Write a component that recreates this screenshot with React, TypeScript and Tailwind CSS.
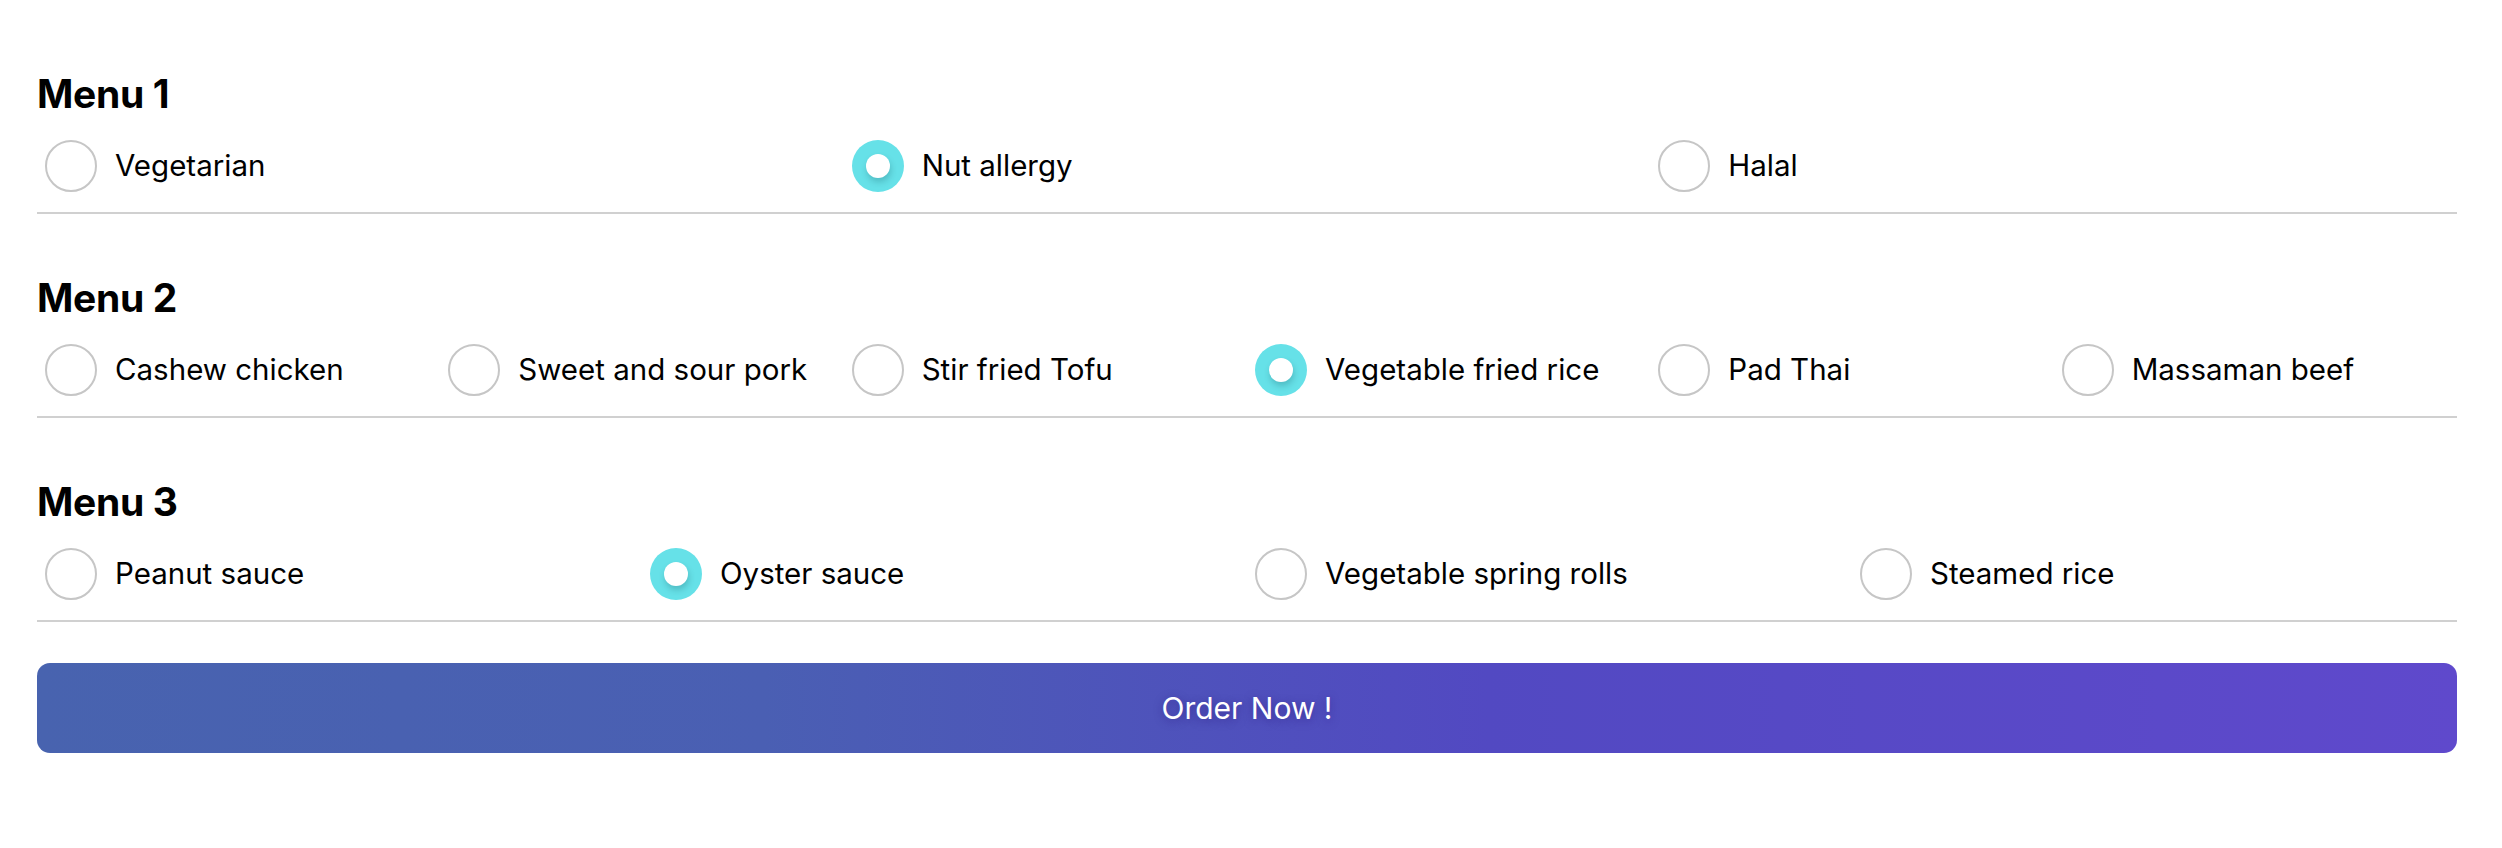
import React from "react";

type Menu = { title: string; items: string[]; selected: number; cols: string };

const menus: Menu[] = [
  { title: "Menu 1", items: ["Vegetarian", "Nut allergy", "Halal"], selected: 1, cols: "grid-cols-3" },
  {
    title: "Menu 2",
    items: ["Cashew chicken", "Sweet and sour pork", "Stir fried Tofu", "Vegetable fried rice", "Pad Thai", "Massaman beef"],
    selected: 3,
    cols: "grid-cols-6",
  },
  { title: "Menu 3", items: ["Peanut sauce", "Oyster sauce", "Vegetable spring rolls", "Steamed rice"], selected: 1, cols: "grid-cols-4" },
];

function Radio({ checked }: { checked: boolean }) {
  if (checked) {
    return (
      <span className="flex h-[52px] w-[52px] shrink-0 items-center justify-center rounded-full bg-[#66e1e8]">
        <span className="h-[24px] w-[24px] rounded-full bg-white shadow-[1px_4px_6px_rgba(0,60,70,0.22)]" />
      </span>
    );
  }
  return <span className="h-[52px] w-[52px] shrink-0 rounded-full border-[2px] border-[#c6c6c6] bg-white" />;
}

export default function App() {
  return (
    <div className="min-h-screen bg-white pl-[37px] pr-[45px] pt-[10px] text-black" style={{ fontFamily: "Inter, 'Noto Sans', sans-serif" }}>
      {menus.map((m) => (
        <section key={m.title} className="border-b-2 border-[#d0d0d0] pt-[60px] pb-[20px]">
          <h2 className="text-[39px] font-bold leading-[48px] tracking-[-0.3px]">{m.title}</h2>
          <div className={`mt-[22px] grid ${m.cols}`}>
            {m.items.map((it, i) => (
              <label key={it} className="flex h-[52px] items-center pl-[8px]">
                <Radio checked={i === m.selected} />
                <span className="ml-[18px] text-[29.5px] leading-none">{it}</span>
              </label>
            ))}
          </div>
        </section>
      ))}
      <button className="mt-[41px] flex h-[90px] w-full items-center justify-center rounded-[13px] bg-[linear-gradient(90deg,#4863af_0%,#4a5fb3_30%,#5249c2_60%,#5f49cc_100%)] text-[30px] text-white [text-shadow:0_2px_8px_rgba(40,20,120,0.5)]">
        Order Now !
      </button>
    </div>
  );
}
